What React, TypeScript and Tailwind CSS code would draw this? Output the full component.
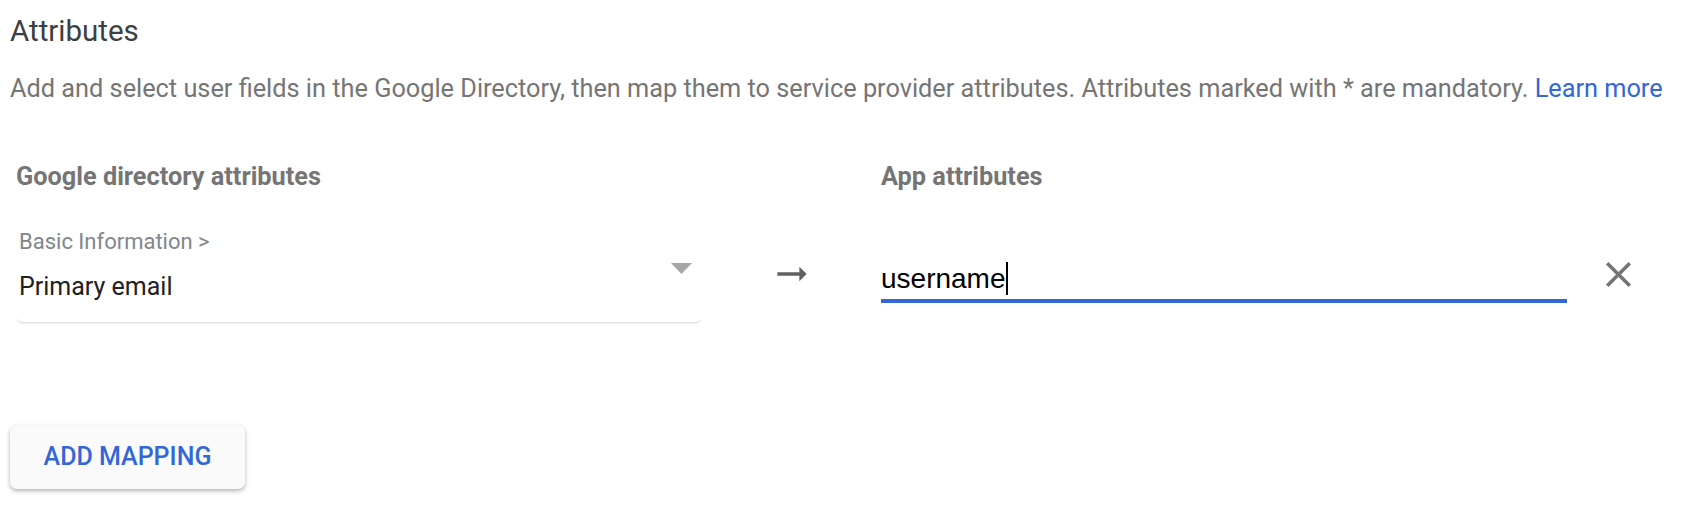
import React from 'react';

const ArrowRightAlt: React.FC = () => (
  <svg width="44" height="44" viewBox="0 0 24 24" className="fill-[#616161]">
    <path d="M16.01 11H4v2h12.01v3L20 12l-3.99-4z" />
  </svg>
);

const CloseIcon: React.FC = () => (
  <svg width="43" height="43" viewBox="0 0 24 24" className="fill-[#757575]">
    <path d="M19 6.41L17.59 5 12 10.59 6.41 5 5 6.41 10.59 12 5 17.59 6.41 19 12 13.41 17.59 19 19 17.59 13.41 12z" />
  </svg>
);

const App: React.FC = () => {
  return (
    <div className="min-h-screen bg-white px-[10px] pt-[17px] font-['Roboto','Liberation_Sans',sans-serif]">
      <h2 className="text-[29.5px] leading-[28px] font-normal text-[#3c4043]">Attributes</h2>
      <p className="mt-[31px] text-[25.3px] leading-[25px] text-[#757575] whitespace-nowrap">
        Add and select user fields in the Google Directory, then map them to service provider attributes. Attributes
        marked with * are mandatory.{' '}
        <a href="#" className="text-[#3367d6]">Learn more</a>
      </p>

      {/* mapping table */}
      <div className="mt-[63px] ml-[6px] grid grid-cols-[686px_179px_686px_auto] gap-y-[16px]">
        <div className="text-[25.3px] leading-[25px] font-bold text-[#757575]">Google directory attributes</div>
        <div />
        <div className="text-[25.3px] leading-[25px] font-bold text-[#757575]">App attributes</div>
        <div />

        <div className="flex h-[117px] items-start justify-between rounded-[6px] bg-white pl-[3px] pr-[10px] pt-[26px] shadow-[0_2px_2px_-1px_rgba(0,0,0,0.18)]">
          <div className="flex flex-col">
            <span className="text-[22px] leading-[22px] text-[#80868b]">Basic Information &gt;</span>
            <span className="mt-[21px] text-[25px] leading-[25px] text-[#202124]">Primary email</span>
          </div>
          <svg width="21" height="11" viewBox="0 0 21 11" className="mt-[32px] fill-[#a6a6a6]">
            <polygon points="0,0 21,0 10.5,11" />
          </svg>
        </div>

        <div className="flex justify-center pt-[47px]">
          <ArrowRightAlt />
        </div>

        <div className="pt-[53px]">
          <div className="flex h-[45px] items-start border-b-4 border-[#3367d6] font-['Liberation_Sans',Arial,sans-serif] text-[28px] leading-[41px] text-black">
            username
            <span className="mt-[4px] h-[33px] w-[2px] bg-black" />
          </div>
        </div>

        <div className="pl-[30px] pt-[48px]">
          <CloseIcon />
        </div>
      </div>

      <button className="mt-[103px] h-[64px] w-[235px] rounded-[7px] bg-[#fafafa] text-[25px] font-medium text-[#3367d6] shadow-[0_2px_4px_rgba(0,0,0,0.3)]">
        ADD MAPPING
      </button>
    </div>
  );
};

export default App;
